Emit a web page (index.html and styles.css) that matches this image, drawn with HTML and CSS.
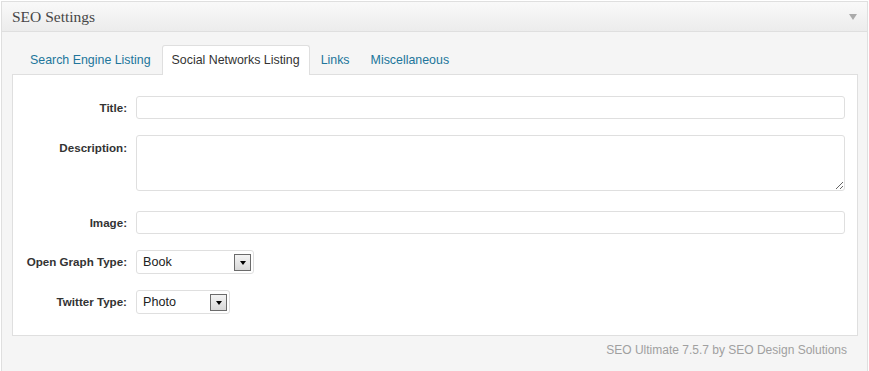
FILE: index.html
```html
<!DOCTYPE html>
<html lang="en">
<head>
    <meta charset="UTF-8">
    <title>SEO Settings</title>
    <link rel="stylesheet" href="styles.css">
</head>
<body>
    <div class="postbox">
        <div class="postbox-head">
            <h3>SEO Settings</h3>
            <span class="toggle"></span>
        </div>
        <div class="inside">
            <ul class="tabs">
                <li><a href="#">Search Engine Listing</a></li>
                <li class="active"><a href="#">Social Networks Listing</a></li>
                <li><a href="#">Links</a></li>
                <li><a href="#">Miscellaneous</a></li>
            </ul>
            <div class="panel">
                <div class="row">
                    <label for="og-title">Title:</label>
                    <input type="text" id="og-title">
                </div>
                <div class="row">
                    <label for="og-desc">Description:</label>
                    <textarea id="og-desc"></textarea>
                </div>
                <div class="row">
                    <label for="og-image">Image:</label>
                    <input type="text" id="og-image">
                </div>
                <div class="row">
                    <label>Open Graph Type:</label>
                    <div class="select select-og">
                        <span>Book</span>
                        <span class="arrow"></span>
                    </div>
                </div>
                <div class="row">
                    <label>Twitter Type:</label>
                    <div class="select select-tw">
                        <span>Photo</span>
                        <span class="arrow"></span>
                    </div>
                </div>
            </div>
            <div class="credit">SEO Ultimate 7.5.7 by SEO Design Solutions</div>
        </div>
    </div>
</body>
</html>
```

FILE: styles.css
```css
body {
    margin: 0;
    padding: 0;
    background-color: #fff;
    font-family: "Liberation Sans", Arial, sans-serif;
    font-size: 12px;
    color: #333;
}

.postbox {
    margin: 1px 1px 0 1px;
    border: 1px solid #dfdfdf;
    border-bottom: none;
    background-color: #f5f5f5;
    height: 370px;
    box-sizing: border-box;
}

.postbox-head {
    height: 29px;
    border-bottom: 1px solid #dfdfdf;
    background: linear-gradient(to bottom, #f9f9f9, #ececec);
    display: flex;
    align-items: center;
    justify-content: space-between;
    padding: 0 10px;
}

.postbox-head h3 {
    margin: 0;
    font-family: "Liberation Serif", Georgia, serif;
    font-size: 15.5px;
    font-weight: normal;
    color: #464646;
}

.toggle {
    width: 0;
    height: 0;
    border-left: 4px solid transparent;
    border-right: 4px solid transparent;
    border-top: 6px solid #aaa;
}

.inside {
    padding: 13px 9px 0 10px;
}

.tabs {
    list-style: none;
    margin: 0 0 0 8px;
    padding: 0;
    display: flex;
    height: 29px;
}

.tabs li {
    margin-right: 1px;
    border: 1px solid transparent;
    border-bottom: none;
    border-radius: 3px 3px 0 0;
}

.tabs a {
    display: block;
    padding: 0 9px;
    line-height: 28px;
    font-size: 12.4px;
    color: #21759b;
    text-decoration: none;
}

.tabs li.active {
    background-color: #fff;
    border-color: #dfdfdf;
    height: 29px;
    position: relative;
    margin-bottom: -1px;
}

.tabs li.active a {
    color: #333;
}

.panel {
    background-color: #fff;
    border: 1px solid #dfdfdf;
    padding: 21px 12px 21px 0;
}

.row {
    display: flex;
    align-items: flex-start;
    margin-bottom: 16px;
}

.row:last-child {
    margin-bottom: 0;
}

.row label {
    width: 114px;
    padding-right: 9px;
    text-align: right;
    font-weight: bold;
    font-size: 11.6px;
    line-height: 23px;
    flex-shrink: 0;
}

.row:nth-child(2) label {
    line-height: 26px;
}

input,
textarea {
    flex: 1;
    height: 23px;
    border: 1px solid #dfdfdf;
    border-radius: 3px;
    box-sizing: border-box;
    font-family: inherit;
    font-size: 12px;
    padding: 2px 6px;
    margin: 0;
}

textarea {
    height: 56px;
    margin-bottom: 4px;
}

.select {
    display: flex;
    align-items: center;
    justify-content: space-between;
    height: 24px;
    box-sizing: border-box;
    border: 1px solid #dfdfdf;
    border-radius: 3px;
    padding: 0 2px 0 6px;
    font-size: 12.6px;
    color: #222;
}

.select-og {
    width: 118px;
}

.select-tw {
    width: 94px;
}

.arrow {
    width: 17px;
    height: 17px;
    box-sizing: border-box;
    border: 1px solid #6b6b6b;
    background: linear-gradient(to bottom, #f4f4f4, #d8d8d8);
    display: flex;
    align-items: center;
    justify-content: center;
}

.arrow::after {
    content: "";
    width: 0;
    height: 0;
    border-left: 3.5px solid transparent;
    border-right: 3.5px solid transparent;
    border-top: 4px solid #000;
    margin-top: 1px;
}

.credit {
    text-align: right;
    padding: 7px 11px 0 0;
    color: #a0a0a0;
    font-size: 12px;
}
```
